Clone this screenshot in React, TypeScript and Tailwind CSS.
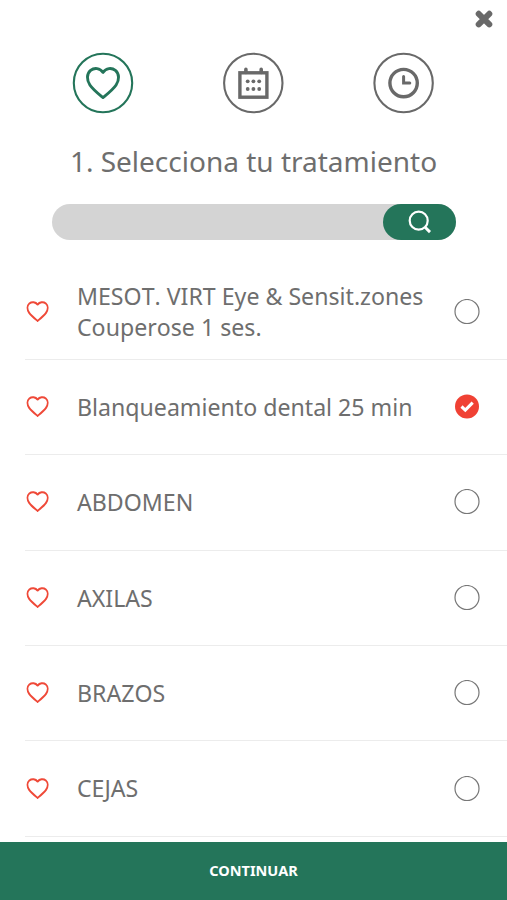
const treatments = [
  { name: "MESOT. VIRT Eye & Sensit.zones Couperose 1 ses.", selected: false },
  { name: "Blanqueamiento dental 25 min", selected: true },
  { name: "ABDOMEN", selected: false },
  { name: "AXILAS", selected: false },
  { name: "BRAZOS", selected: false },
  { name: "CEJAS", selected: false },
];

function HeartStep() {
  return (
    <svg className="size-[62px]" viewBox="0 0 62 62" fill="none" stroke="#24755a">
      <circle cx="31" cy="31" r="29.2" strokeWidth="2.1" />
      <path
        d="M31 20.4C28 15.9 22.3 15.4 18.6 18.4C14.5 21.9 14.6 28 17.9 33C21 37.6 26 41.5 31 45.6C36 41.5 41 37.6 44.1 33C47.4 28 47.5 21.9 43.4 18.4C39.7 15.4 34 15.9 31 20.4Z"
        strokeWidth="2.9"
        strokeLinejoin="round"
      />
    </svg>
  );
}

function CalendarStep() {
  return (
    <svg className="size-[62px]" viewBox="0 0 62 62" fill="none" stroke="#696969">
      <circle cx="30.3" cy="31" r="29.2" strokeWidth="2.1" />
      <rect x="16.9" y="20.8" width="27" height="24.4" strokeWidth="3.4" />
      <path d="M22.9 20.5V17.4M38.2 20.5V17.4" strokeWidth="3.6" strokeLinecap="round" />
      <g fill="#696969" stroke="none">
        {[29.3, 37].map((y) =>
          [24.7, 30.4, 36.2].map((x) => <circle key={`${x}-${y}`} cx={x} cy={y} r="1.9" />)
        )}
      </g>
    </svg>
  );
}

function ClockStep() {
  return (
    <svg className="size-[62px]" viewBox="0 0 62 62" fill="none" stroke="#696969">
      <circle cx="30.6" cy="31" r="29.2" strokeWidth="2.1" />
      <circle cx="30.6" cy="31.1" r="13.7" strokeWidth="3.4" />
      <path d="M30.6 24.4V31.1H36.8" strokeWidth="3" strokeLinecap="round" />
    </svg>
  );
}

function RowHeart() {
  return (
    <svg className="h-[24px] w-[26px] shrink-0" viewBox="0 0 26 24" fill="none" stroke="#ef4938">
      <path
        d="M12.6 4.6C10.6 1.9 6.8 1.5 4.4 3.4C1.8 5.7 2.1 9.8 4.2 12.9C6.2 15.8 9.4 18.3 12.6 20.9C15.8 18.3 19 15.8 21 12.9C23.1 9.8 23.4 5.7 20.8 3.4C18.4 1.5 14.6 1.9 12.6 4.6Z"
        strokeWidth="1.9"
        strokeLinejoin="round"
      />
    </svg>
  );
}

function Radio({ selected }: { selected: boolean }) {
  return (
    <svg className="size-[26px] shrink-0" viewBox="0 0 26 26" fill="none">
      {selected ? (
        <>
          <circle cx="13" cy="12.5" r="12" fill="#f04134" />
          <path d="M7.5 12.5L11.3 16.1L18.7 8.7" stroke="white" strokeWidth="3.1" />
        </>
      ) : (
        <circle cx="13" cy="12.5" r="12" stroke="#777777" strokeWidth="1.2" />
      )}
    </svg>
  );
}

export default function App() {
  return (
    <main className="flex h-[900px] w-[507px] flex-col overflow-hidden bg-white font-['Noto_Sans',sans-serif] text-[#6e6e6e]">
      <header className="flex h-[52px] shrink-0 justify-end pt-[9px] pr-[13px]">
        <button aria-label="Cerrar" className="size-5">
          <svg className="size-5" viewBox="0 0 20 20">
            <path
              d="M4.7 4.8L15.3 15.4M15.3 4.8L4.7 15.4"
              stroke="#696969"
              strokeWidth="6"
              strokeLinecap="round"
            />
          </svg>
        </button>
      </header>
      <nav className="flex h-[62px] shrink-0 justify-between pr-[72px] pl-[72px]">
        <HeartStep />
        <CalendarStep />
        <ClockStep />
      </nav>
      <h1 className="mt-[27px] h-10 shrink-0 text-center text-[28px] leading-10 whitespace-nowrap">
        1. Selecciona tu tratamiento
      </h1>
      <div className="mt-[23px] ml-[52px] flex h-[36px] w-[404px] shrink-0 justify-end rounded-full bg-[#d4d4d4]">
        <button aria-label="Buscar" className="flex w-[73px] items-center justify-center rounded-full bg-[#24755a]">
          <svg className="size-6" viewBox="0 0 24 24" fill="none" stroke="white" strokeWidth="2.2">
            <circle cx="10.7" cy="10.7" r="9" />
            <path d="M17.1 17.2L22 22.1" strokeWidth="2.9" />
          </svg>
        </button>
      </div>
      <ul className="mt-[24.5px] min-h-0 flex-1 overflow-hidden pl-[25px]">
        {treatments.map((t) => (
          <li
            key={t.name}
            className="flex h-[95.4px] items-center border-b border-[#ececec] pr-[27px]"
          >
            <RowHeart />
            <span className="ml-[26px] w-[377px] shrink-0 pt-px pr-4 text-[23.15px] leading-[31.5px] [font-kerning:none]">
              {t.name}
            </span>
            <Radio selected={t.selected} />
          </li>
        ))}
      </ul>
      <button className="h-[58px] w-full shrink-0 bg-[#24755a] pb-px text-[14.5px] font-bold text-white">
        CONTINUAR
      </button>
    </main>
  );
}
